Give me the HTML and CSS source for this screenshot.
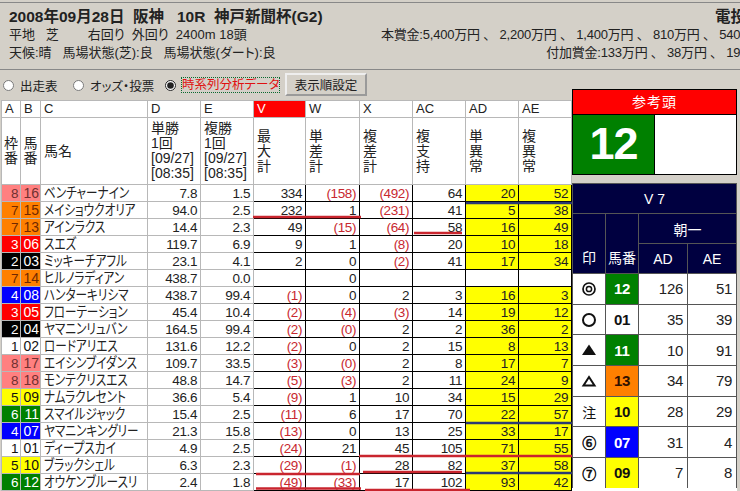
FILE: index.html
```html
<!DOCTYPE html>
<html lang="ja">
<head>
    <meta charset="UTF-8">
    <meta name="viewport" content="width=device-width, initial-scale=1.0">
    <title>時系列分析データ</title>
    <link rel="stylesheet" href="styles.css">
</head>
<body>
    <div class="race-head">
        <div class="race-line race-title"><span>2008年09月28日&nbsp; 阪神&nbsp;&nbsp; 10R&nbsp; 神戸新聞杯(G2)</span><span class="race-net">電投</span></div>
        <div class="race-line"><span>平地&nbsp;&nbsp; 芝&nbsp;&nbsp;&nbsp;&nbsp;&nbsp;&nbsp;&nbsp; 右回り&nbsp; 外回り&nbsp; 2400m 18頭</span><span class="prize">本賞金:5,400万円 、 2,200万円 、 1,400万円 、 810万円 、 540万円</span></div>
        <div class="race-line"><span>天候:晴&nbsp;&nbsp; 馬場状態(芝):良&nbsp;&nbsp; 馬場状態(ダート):良</span><span class="prize">付加賞金:133万円 、 38万円 、 19万円</span></div>
    </div>

    <div class="main">
        <div class="left">
            <div class="tabs">
                <label class="tab tab-a"><input type="radio" name="view">出走表</label>
                <label class="tab tab-b"><input type="radio" name="view">オッズ・投票</label>
                <label class="tab tab-c"><input type="radio" name="view" checked><span class="focus">時系列分析データ</span></label>
                <button class="order-btn">表示順設定</button>
            </div>

            <div class="grid-wrap">
                <table class="grid">
                    <colgroup>
                        <col class="c-s1"><col class="c-s2"><col class="c-name">
                        <col class="c-m"><col class="c-m"><col class="c-v"><col class="c-w">
                        <col class="c-m"><col class="c-m"><col class="c-m"><col class="c-m">
                    </colgroup>
                    <tr class="letters">
                        <th>A</th><th>B</th><th>C</th><th>D</th><th>E</th><th class="hot">V</th><th>W</th><th>X</th><th>AC</th><th>AD</th><th>AE</th>
                    </tr>
                    <tr class="titles">
                        <th class="mid">枠<br>番</th><th class="mid">馬<br>番</th><th>馬名</th>
                        <th>単勝<br>1回<br>[09/27]<br>[08:35]</th><th>複勝<br>1回<br>[09/27]<br>[08:35]</th>
                        <th>最<br>大<br>計</th><th>単<br>差<br>計</th><th>複<br>差<br>計</th><th>複<br>支<br>持</th><th>単<br>異<br>常</th><th>複<br>異<br>常</th>
                    </tr>
                    <tr><td class="w8">8</td><td class="w8">16</td><td><span class="nm">ベンチャーナイン</span></td><td>7.8</td><td>1.5</td><td>334</td><td class="neg">(158)</td><td class="neg">(492)</td><td>64</td><td class="y">20</td><td class="y">52</td></tr>
                    <tr><td class="w7">7</td><td class="w7">15</td><td><span class="nm">メイショウクオリア</span></td><td>94.0</td><td>2.5</td><td>232</td><td>1</td><td class="neg">(231)</td><td>41</td><td class="y">5</td><td class="y">38</td></tr>
                    <tr><td class="w7">7</td><td class="w7">13</td><td><span class="nm">アインラクス</span></td><td>14.4</td><td>2.3</td><td>49</td><td class="neg">(15)</td><td class="neg">(64)</td><td>58</td><td class="y">16</td><td class="y">49</td></tr>
                    <tr><td class="w3">3</td><td class="w3">06</td><td><span class="nm">スエズ</span></td><td>119.7</td><td>6.9</td><td>9</td><td>1</td><td class="neg">(8)</td><td>20</td><td class="y">10</td><td class="y">18</td></tr>
                    <tr><td class="w2">2</td><td class="w2">03</td><td><span class="nm">ミッキーチアフル</span></td><td>23.1</td><td>4.1</td><td>2</td><td>0</td><td class="neg">(2)</td><td>41</td><td class="y">17</td><td class="y">34</td></tr>
                    <tr><td class="w7">7</td><td class="w7">14</td><td><span class="nm">ヒルノラディアン</span></td><td>438.7</td><td>0.0</td><td></td><td>0</td><td></td><td></td><td></td><td></td></tr>
                    <tr><td class="w4">4</td><td class="w4">08</td><td><span class="nm">ハンターキリシマ</span></td><td>438.7</td><td>99.4</td><td class="neg">(1)</td><td>0</td><td>2</td><td>3</td><td class="y">16</td><td class="y">3</td></tr>
                    <tr><td class="w3">3</td><td class="w3">05</td><td><span class="nm">フローテーション</span></td><td>45.4</td><td>10.4</td><td class="neg">(2)</td><td class="neg">(4)</td><td class="neg">(3)</td><td>14</td><td class="y">19</td><td class="y">12</td></tr>
                    <tr><td class="w2">2</td><td class="w2">04</td><td><span class="nm">ヤマニンリュバン</span></td><td>164.5</td><td>99.4</td><td class="neg">(2)</td><td class="neg">(0)</td><td>2</td><td>2</td><td class="y">36</td><td class="y">2</td></tr>
                    <tr><td class="w1">1</td><td class="w1">02</td><td><span class="nm">ロードアリエス</span></td><td>131.6</td><td>12.2</td><td class="neg">(2)</td><td>0</td><td>2</td><td>15</td><td class="y">8</td><td class="y">13</td></tr>
                    <tr><td class="w8">8</td><td class="w8">17</td><td><span class="nm">エイシンブイダンス</span></td><td>109.7</td><td>33.5</td><td class="neg">(3)</td><td class="neg">(0)</td><td>2</td><td>8</td><td class="y">17</td><td class="y">7</td></tr>
                    <tr><td class="w8">8</td><td class="w8">18</td><td><span class="nm">モンテクリスエス</span></td><td>48.8</td><td>14.7</td><td class="neg">(5)</td><td class="neg">(3)</td><td>2</td><td>11</td><td class="y">24</td><td class="y">9</td></tr>
                    <tr><td class="w5">5</td><td class="w5">09</td><td><span class="nm">ナムラクレセント</span></td><td>36.6</td><td>5.4</td><td class="neg">(9)</td><td>1</td><td>10</td><td>34</td><td class="y">15</td><td class="y">29</td></tr>
                    <tr><td class="w6">6</td><td class="w6">11</td><td><span class="nm">スマイルジャック</span></td><td>15.4</td><td>2.5</td><td class="neg">(11)</td><td>6</td><td>17</td><td>70</td><td class="y">22</td><td class="y">57</td></tr>
                    <tr><td class="w4">4</td><td class="w4">07</td><td><span class="nm">ヤマニンキングリー</span></td><td>21.3</td><td>15.8</td><td class="neg">(13)</td><td>0</td><td>13</td><td>25</td><td class="y">33</td><td class="y">17</td></tr>
                    <tr><td class="w1">1</td><td class="w1">01</td><td><span class="nm">ディープスカイ</span></td><td>4.9</td><td>2.5</td><td class="neg">(24)</td><td>21</td><td>45</td><td>105</td><td class="y">71</td><td class="y">55</td></tr>
                    <tr><td class="w5">5</td><td class="w5">10</td><td><span class="nm">ブラックシェル</span></td><td>6.3</td><td>2.3</td><td class="neg">(29)</td><td class="neg">(1)</td><td>28</td><td>82</td><td class="y">37</td><td class="y">58</td></tr>
                    <tr><td class="w6">6</td><td class="w6">12</td><td><span class="nm">オウケンブルースリ</span></td><td>2.4</td><td>1.8</td><td class="neg">(49)</td><td class="neg">(33)</td><td>17</td><td>102</td><td class="y">93</td><td class="y">42</td></tr>
                </table>

                <!-- hand drawn pen marks on top of the sheet -->
                <svg class="pen" width="740" height="391" viewBox="0 100 740 391">
                    <g stroke="#c9252e" stroke-width="2.5">
                        <line x1="253" y1="217" x2="361" y2="217"/>
                        <line x1="414" y1="233" x2="462" y2="233"/>
                        <line x1="359" y1="456" x2="572" y2="456"/>
                        <line x1="363" y1="472" x2="462" y2="472"/>
                        <line x1="256" y1="474" x2="360" y2="474"/>
                        <line x1="256" y1="488.5" x2="361" y2="488.5"/>
                        <line x1="365" y1="490" x2="470" y2="490"/>
                    </g>
                    <g stroke="#2b3a72" stroke-width="2.5">
                        <line x1="466" y1="203" x2="572" y2="203"/>
                        <line x1="466" y1="423" x2="572" y2="423"/>
                        <line x1="466" y1="473" x2="572" y2="473"/>
                    </g>
                </svg>
            </div>
        </div>

        <div class="side">
            <div class="pick">
                <div class="pick-title">参考頭</div>
                <div class="pick-body">
                    <div class="pick-num">12</div>
                    <div class="pick-empty"></div>
                </div>
            </div>

            <table class="v7">
                <colgroup><col class="v-a"><col class="v-a"><col class="v-b"><col class="v-b"></colgroup>
                <tr class="v-head"><th colspan="4">V 7</th></tr>
                <tr class="v-head"><th rowspan="2" class="v-low">印</th><th rowspan="2" class="v-low">馬番</th><th colspan="2">朝一</th></tr>
                <tr class="v-head"><th>AD</th><th>AE</th></tr>
                <tr>
                    <td class="mark"><svg class="sym" viewBox="0 0 16 16"><circle cx="8" cy="8" r="6" fill="none" stroke="#111" stroke-width="1.7"/><circle cx="8" cy="8" r="2.6" fill="none" stroke="#111" stroke-width="1.5"/></svg></td>
                    <td class="no w6">12</td><td>126</td><td>51</td>
                </tr>
                <tr>
                    <td class="mark"><svg class="sym" viewBox="0 0 16 16"><circle cx="8" cy="8" r="6" fill="none" stroke="#111" stroke-width="2"/></svg></td>
                    <td class="no w1">01</td><td>35</td><td>39</td>
                </tr>
                <tr>
                    <td class="mark"><svg class="sym" viewBox="0 0 16 16"><path d="M8 2.5 15 13H1z" fill="#111"/></svg></td>
                    <td class="no w6">11</td><td>10</td><td>91</td>
                </tr>
                <tr>
                    <td class="mark"><svg class="sym" viewBox="0 0 16 16"><path d="M8 4 13.5 12.5H2.5z" fill="none" stroke="#111" stroke-width="2"/></svg></td>
                    <td class="no w7">13</td><td>34</td><td>79</td>
                </tr>
                <tr><td class="mark">注</td><td class="no w5">10</td><td>28</td><td>29</td></tr>
                <tr><td class="mark circled">⑥</td><td class="no w4">07</td><td>31</td><td>4</td></tr>
                <tr><td class="mark circled">⑦</td><td class="no w5">09</td><td>7</td><td>8</td></tr>
            </table>
            <div class="side-tail"></div>
        </div>
    </div>
</body>
</html>
```

FILE: styles.css
```css
html, body {
    margin: 0;
    height: 491px;
    overflow: hidden;
}
body {
    background-color: #d4d0c8;
    color: #222;
    font-family: "Liberation Sans", "Noto Sans CJK JP", sans-serif;
    font-feature-settings: "palt";
    font-size: 14px;
}

/* race info */
.race-head {
    box-sizing: border-box;
    width: 766px;
    height: 68px;
    margin-top: 2px;
    padding: 3px 0 0 9px;
    border-top: 1px solid #888;
    border-bottom: 1px solid #888;
}
.race-line {
    display: flex;
    justify-content: space-between;
    height: 18px;
    line-height: 18px;
    font-size: 13px;
    white-space: nowrap;
}
.race-title {
    height: 20px;
    line-height: 22px;
    font-size: 15.5px;
    font-weight: bold;
}
.race-net {
    padding-right: 20px;
}
.prize {
    font-feature-settings: normal;
    letter-spacing: -0.2px;
}

/* main area */
.main {
    display: flex;
    height: 421px;
    overflow: hidden;
}
.left {
    width: 571px;
    margin-left: 1px;
}
.side {
    width: 165px;
    padding-top: 19px;
}

/* radio row */
.tabs {
    display: flex;
    align-items: center;
    height: 30px;
    padding-left: 1px;
    font-size: 12.5px;
}
.tab {
    display: flex;
    align-items: center;
}
.tab input {
    width: 11px;
    height: 11px;
    margin: 0 6px 0 1px;
    accent-color: #222;
}
.tab-a { width: 70px; }
.tab-b { width: 92px; }
.tab-c { width: 121px; }
.focus {
    color: #e01010;
    outline: 1px dotted #0a6a30;
    line-height: 14px;
}
.order-btn {
    width: 82px;
    height: 23px;
    margin-top: -1px;
    padding: 0;
    background-color: #d4d0c8;
    border: 2px outset #eee;
    color: #222;
    font-family: inherit;
    font-size: 12.5px;
}

/* main sheet */
.grid-wrap {
    position: relative;
}
.grid {
    width: 570px;
    table-layout: fixed;
    border-collapse: collapse;
    background-color: #fff;
    border-top: 1px solid #000;
    border-left: 1px solid #000;
}
.c-s1 { width: 19px; }
.c-s2 { width: 20px; }
.c-name { width: 107px; }
.c-m { width: 53px; }
.c-v { width: 52px; }
.c-w { width: 54px; }
.grid th {
    padding: 0 0 0 3px;
    border: 1px solid #b8b8b8;
    font-weight: normal;
    text-align: left;
    overflow: hidden;
    white-space: nowrap;
}
.letters th {
    height: 16px;
    line-height: 16px;
    font-size: 13px;
}
.letters .hot {
    background-color: #f00;
    color: #fff;
}
.titles th {
    height: 66px;
    line-height: 15px;
    font-size: 14px;
}
.titles .mid {
    padding: 0;
    text-align: center;
}
.grid td {
    height: 15px;
    padding: 1px 3px 0 0;
    border: 1px solid #000;
    line-height: 15px;
    font-size: 13.5px;
    letter-spacing: -0.4px;
    text-align: right;
    overflow: hidden;
    white-space: nowrap;
}
.grid td:nth-child(-n+5) {
    border-color: #b8b8b8;
}
.grid td:nth-child(1) {
    padding-right: 2px;
}
.grid td:nth-child(2) {
    padding-right: 1px;
    font-size: 14px;
    letter-spacing: 0;
}
.grid td:nth-child(3) {
    padding: 1px 0 0 3px;
    text-align: left;
}
.nm {
    display: inline-block;
    font-size: 14.5px;
    letter-spacing: 0;
    transform: scaleX(0.8);
    transform-origin: left center;
}
.grid td.neg {
    color: #c8282f;
}
.grid td.y {
    background-color: #ff0;
}

/* waku colours */
.w1 { background-color: #fff; color: #111; }
.w2 { background-color: #000; color: #fff; }
.w3 { background-color: #f00; color: #fff; }
.w4 { background-color: #00f; color: #fff; }
.w5 { background-color: #ff0; color: #111; }
.w6 { background-color: #008000; color: #fff; }
.w7 { background-color: #ff8000; color: #702800; }
.w8 { background-color: #ff8080; color: #703030; }

.pen {
    position: absolute;
    left: -1px;
    top: 0;
    pointer-events: none;
}

/* right column */
.pick {
    box-sizing: border-box;
    width: 165px;
    height: 86px;
    border: 1px solid #000;
}
.pick-title {
    height: 24px;
    line-height: 24px;
    background-color: #f00;
    border-bottom: 1px solid #000;
    color: #fff;
    font-size: 14px;
    text-align: center;
    letter-spacing: 1px;
}
.pick-body {
    display: flex;
    height: 59px;
}
.pick-num {
    width: 81px;
    background-color: #008000;
    border-right: 1px solid #000;
    color: #fff;
    font-size: 45px;
    font-weight: bold;
    letter-spacing: -1px;
    line-height: 58px;
    text-align: center;
}
.pick-empty {
    flex: 1;
    background-color: #fff;
}
.v7 {
    width: 164px;
    margin-top: 8px;
    table-layout: fixed;
    border-collapse: collapse;
    background-color: #fff;
}
.v-a { width: 33px; }
.v-b { width: 49px; }
.v-head th {
    height: 29px;
    padding: 0;
    background-color: #000040;
    border: 1px solid #555;
    color: #fff;
    font-size: 14px;
    font-weight: normal;
}
.v-head .v-low {
    padding-bottom: 6px;
    vertical-align: bottom;
}
.v7 td {
    height: 29.7px;
    padding: 0 4px 0 0;
    border: 1px solid #555;
    font-size: 15px;
    letter-spacing: -0.3px;
    text-align: right;
}
.v7 tr:last-child td {
    border-bottom: 0;
}
.v7 td.mark {
    padding: 0;
    color: #111;
    font-size: 14px;
    text-align: center;
}
.v7 td.circled {
    -webkit-text-stroke: 0.6px #111;
}
.sym {
    display: block;
    width: 16px;
    height: 16px;
    margin: 0 auto;
}
.v7 td.no {
    padding: 0;
    font-weight: bold;
    text-align: center;
}
.v7 td.w7 {
    color: #301000;
}
.side-tail {
    height: 4px;
    background-color: #fff;
}
```
